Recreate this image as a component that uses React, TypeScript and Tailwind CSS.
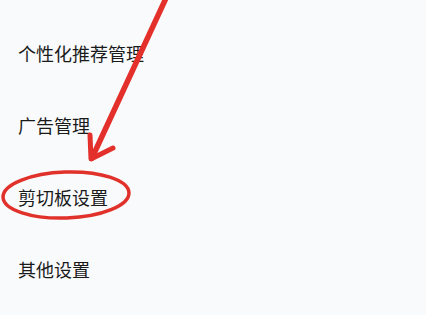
import { Fragment } from 'react'

const items = ['个性化推荐管理', '广告管理', '剪切板设置', '其他设置']

export default function App() {
  return (
    <div className="relative w-[426px] h-[315px] overflow-hidden bg-[#f9fafc] font-['Noto_Sans_CJK_SC','Noto_Sans',sans-serif]">
      <div className="pt-[17px] flex flex-col">
        {items.map(label => (
          <Fragment key={label}>
            <div className="h-[72px] pl-[18px] flex items-center text-[18px] leading-none font-normal text-[#1a1a1a]">
              {label}
            </div>
          </Fragment>
        ))}
      </div>

      {/* hand-drawn annotation */}
      <svg className="absolute inset-0 pointer-events-none" width="426" height="315" viewBox="0 0 426 315">
        <path d="M167 -4 L92 158" stroke="#e3302a" strokeWidth="5.5" strokeLinecap="round" fill="none" />
        <path d="M90 135 L91 159 L113 148" stroke="#e3302a" strokeWidth="5" strokeLinecap="round" strokeLinejoin="round" fill="none" />
        <ellipse cx="66" cy="195" rx="63" ry="23" stroke="#e0312b" strokeWidth="3.5" fill="none" transform="rotate(-2 66 195)" />
      </svg>
    </div>
  )
}
